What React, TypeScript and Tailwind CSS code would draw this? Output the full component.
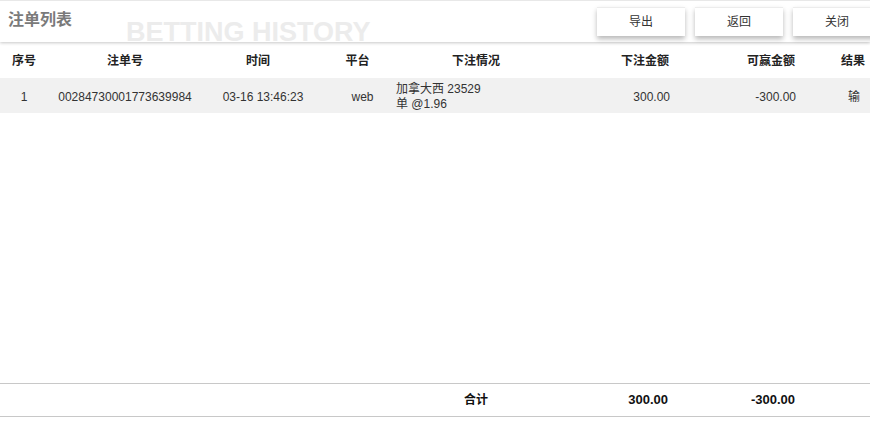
import React from 'react';

const FONT = { fontFamily: '"Liberation Sans", "Noto Sans CJK SC", sans-serif' };

// column boxes: widths add up to 870
const COLS = ['w-[48px]', 'w-[154px]', 'w-[112px]', 'w-[78px]', 'w-[168px]', 'w-[117px]', 'w-[126px]', 'w-[67px]'];

const HEADERS: Array<{ label: string; cls: string }> = [
  { label: '序号', cls: 'text-center' },
  { label: '注单号', cls: 'text-center' },
  { label: '时间', cls: 'text-center' },
  { label: '平台', cls: 'text-center pl-[9px]' },
  { label: '下注情况', cls: 'text-center' },
  { label: '下注金额', cls: 'text-right pr-[8px]' },
  { label: '可赢金额', cls: 'text-right pr-[8px]' },
  { label: '结果', cls: 'text-right pr-[5px]' },
];

type Bet = {
  no: number;
  id: string;
  time: string;
  platform: string;
  detail: [string, string];
  stake: string;
  win: string;
  result: string;
};

const BETS: Bet[] = [
  {
    no: 1,
    id: '00284730001773639984',
    time: '03-16 13:46:23',
    platform: 'web',
    detail: ['加拿大西 23529', '单 @1.96'],
    stake: '300.00',
    win: '-300.00',
    result: '输',
  },
];

function HeaderButton({ label }: { label: string }) {
  return (
    <button className="w-[88px] h-[29px] shrink-0 bg-white border-t border-[#ececec] text-[12px] text-[#333] shadow-[0_3px_5px_rgba(0,0,0,0.28)]">
      {label}
    </button>
  );
}

export default function App() {
  return (
    <div className="w-[870px] h-[423px] bg-white flex flex-col overflow-hidden" style={FONT}>
      {/* Top bar */}
      <div className="h-[42px] shrink-0 flex items-start border-t border-[#e8e8e8] shadow-[0_1px_3px_rgba(0,0,0,0.22)] relative z-10 bg-white">
        <span className="ml-[8px] mt-[8px] text-[16px] leading-[22px] font-semibold text-[#7a7a7a]">注单列表</span>
        <span className="ml-[54px] mt-[18px] text-[27px] leading-[27px] font-bold text-[#ececec] whitespace-nowrap">
          BETTING HISTORY
        </span>
        <div className="ml-auto mr-[-11px] mt-[6px] flex gap-[10px]">
          <HeaderButton label="导出" />
          <HeaderButton label="返回" />
          <HeaderButton label="关闭" />
        </div>
      </div>

      {/* Column titles */}
      <div className="h-[36px] shrink-0 flex items-center text-[12px] font-bold text-[#222] pt-[1px]">
        {HEADERS.map((h, i) => (
          <div key={h.label} className={`${COLS[i]} ${h.cls}`}>
            {h.label}
          </div>
        ))}
      </div>

      {/* Rows */}
      {BETS.map((b) => (
        <div key={b.id} className="h-[35px] shrink-0 flex items-center bg-[#f1f1f1] text-[12px] text-[#333] pt-[2px]">
          <div className={`${COLS[0]} text-center`}>{b.no}</div>
          <div className={`${COLS[1]} text-center`}>{b.id}</div>
          <div className={`${COLS[2]} text-center pl-[10px]`}>{b.time}</div>
          <div className={`${COLS[3]} text-center pl-[19px]`}>{b.platform}</div>
          <div className={`${COLS[4]} pl-[4px] leading-[15px]`}>
            <div>{b.detail[0]}</div>
            <div>{b.detail[1]}</div>
          </div>
          <div className={`${COLS[5]} text-right pr-[7px]`}>{b.stake}</div>
          <div className={`${COLS[6]} text-right pr-[7px]`}>{b.win}</div>
          <div className={`${COLS[7]} text-right pr-[10px]`}>{b.result}</div>
        </div>
      ))}

      <div className="flex-1" />

      {/* Totals */}
      <div className="h-[34px] shrink-0 flex items-center border-y border-[#c8c8c8] font-bold text-[#111]">
        <div className="w-[392px]" />
        <div className={`${COLS[4]} text-center text-[12px]`}>合计</div>
        <div className={`${COLS[5]} text-right pr-[9px] text-[13px]`}>300.00</div>
        <div className={`${COLS[6]} text-right pr-[8px] text-[13px]`}>-300.00</div>
        <div className={COLS[7]} />
      </div>
      <div className="h-[6px] shrink-0" />
    </div>
  );
}
